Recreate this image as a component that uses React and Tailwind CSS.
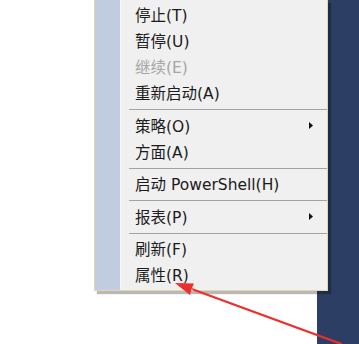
const ITEMS = [
  { label: '停止(T)' },
  { label: '暂停(U)' },
  { label: '继续(E)', disabled: true },
  { label: '重新启动(A)' },
  { sep: true },
  { label: '策略(O)', sub: true },
  { label: '方面(A)' },
  { sep: true },
  { label: '启动 PowerShell(H)' },
  { sep: true },
  { label: '报表(P)', sub: true },
  { sep: true },
  { label: '刷新(F)' },
  { label: '属性(R)' },
];

function MenuRow({ item }) {
  if (item.sep) {
    return (
      <div className="pt-[3px] pb-[2.5px] pl-[8px]">
        <div className="h-px bg-[#a3a3a3]" />
      </div>
    );
  }
  return (
    <div className="h-[26px] flex items-center pl-[14px] pr-[14px]">
      <span className={`flex-1 pt-[4px] text-[15.5px] leading-none ${item.disabled ? 'text-[#a6a6a6]' : 'text-[#1b1b1b]'}`}>
        {item.label}
      </span>
      {item.sub && (
        <svg width="4" height="7" viewBox="0 0 4 7" className="shrink-0">
          <path d="M0 0 L4 3.5 L0 7 Z" fill="#111" />
        </svg>
      )}
    </div>
  );
}

export default function App() {
  return (
    <div
      className="relative w-[359px] h-[344px] overflow-hidden bg-white flex"
      style={{ fontFamily: '"DejaVu Sans", "Noto Sans CJK SC", sans-serif' }}
    >
      <div className="flex-1 bg-white" />
      <div className="w-[42px] bg-[#2c3e64]" />

      {/* context menu */}
      <div className="absolute left-[94px] top-0 w-[234px] h-[291px] flex border-x border-b border-[#e3d7a8] bg-[#f0f0f0] shadow-[3px_3px_1px_rgba(0,0,0,0.28)]">
        <div className="w-[26px] shrink-0 bg-[#c2cce0] border-r border-[#f4f6fa]" />
        <div className="flex-1 flex flex-col pt-[2px] overflow-hidden">
          {ITEMS.map((item, i) => (
            <MenuRow key={i} item={item} />
          ))}
        </div>
      </div>

      {/* red annotation arrow */}
      <svg className="absolute inset-0 pointer-events-none" width="359" height="344" viewBox="0 0 359 344">
        <polygon points="190.6,287.6 193.3,290.8 341,345 342,343" fill="#ec2f2a" />
        <polygon points="175,283 194,283.5 191.5,289 190,295" fill="#ec2f2a" />
      </svg>
    </div>
  );
}
